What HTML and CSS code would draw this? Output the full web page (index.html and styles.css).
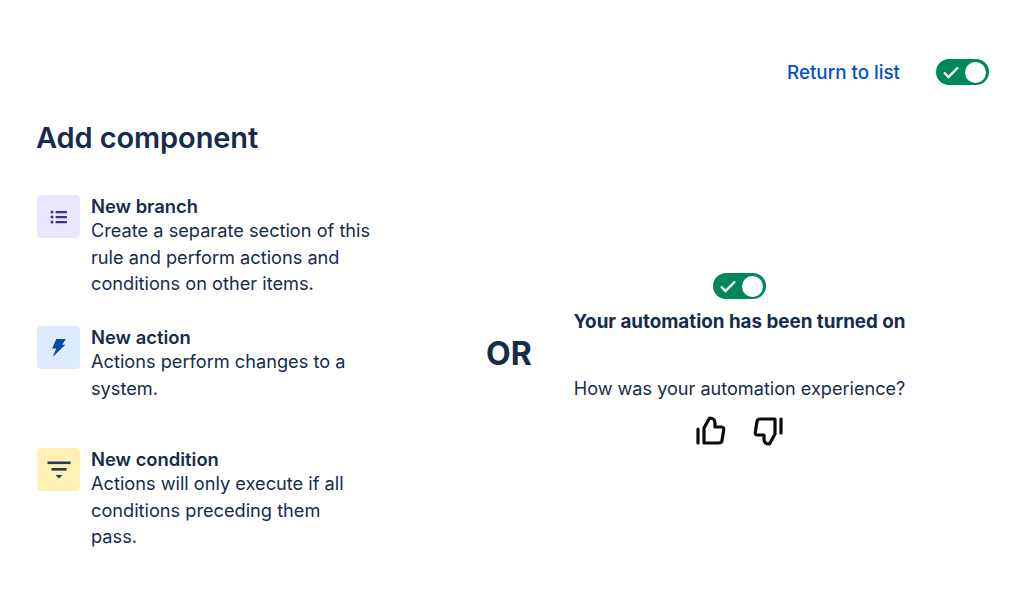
FILE: index.html
```html
<!DOCTYPE html>
<html lang="en">
<head>
<meta charset="UTF-8">
<meta name="viewport" content="width=device-width, initial-scale=1.0">
<title>Add component</title>
<link rel="stylesheet" href="styles.css">
</head>
<body>

<div class="topbar">
  <a class="return-link" href="#">Return to list</a>
  <span class="toggle">
    <svg width="18" height="14" viewBox="0 0 18 14"><path d="M2 7.5 L6.5 12 L16 2.5" fill="none" stroke="#fff" stroke-width="2.4"/></svg>
    <span class="knob"></span>
  </span>
</div>

<div class="main">
  <div class="left">
    <h1>Add component</h1>

    <div class="item item-branch">
      <div class="icon icon-purple">
        <svg width="18" height="14" viewBox="0 0 18 14" fill="#403294">
          <circle cx="2" cy="2" r="1.5"/>
          <circle cx="2" cy="7" r="1.5"/>
          <circle cx="2" cy="12" r="1.5"/>
          <rect x="5.5" y="1" width="11.5" height="2.2" rx="0.8"/>
          <rect x="5.5" y="6" width="11.5" height="2.2" rx="0.8"/>
          <rect x="5.5" y="11" width="11.5" height="2.2" rx="0.8"/>
        </svg>
      </div>
      <div class="text">
        <strong>New branch</strong>
        <p>Create a separate section of this rule and perform actions and conditions on other items.</p>
      </div>
    </div>

    <div class="item item-action">
      <div class="icon icon-blue">
        <svg width="16" height="20" viewBox="0 0 16 22"><path d="M5 1 H15.5 L11.5 7.5 H15 L1 21 L5 11.5 H0.5 Z" fill="#0747a6"/></svg>
      </div>
      <div class="text">
        <strong>New action</strong>
        <p>Actions perform changes to a system.</p>
      </div>
    </div>

    <div class="item item-condition">
      <div class="icon icon-yellow">
        <svg width="24" height="18" viewBox="0 0 24 18" fill="#253858">
          <rect x="0.5" y="0.5" width="23" height="2.6"/>
          <rect x="4.5" y="7" width="15" height="2.6"/>
          <path d="M8.5 14 H15.5 L12 17.5 Z"/>
        </svg>
      </div>
      <div class="text">
        <strong>New condition</strong>
        <p>Actions will only execute if all conditions preceding them pass.</p>
      </div>
    </div>
  </div>

  <div class="or">OR</div>

  <div class="right">
    <span class="toggle">
      <svg width="18" height="14" viewBox="0 0 18 14"><path d="M2 7.5 L6.5 12 L16 2.5" fill="none" stroke="#fff" stroke-width="2.4"/></svg>
      <span class="knob"></span>
    </span>
    <strong class="status">Your automation has been turned on</strong>
    <p class="question">How was your automation experience?</p>
    <div class="thumbs">
      <svg width="30" height="30" viewBox="0 0 30 30" fill="none" stroke="#0b0b0b" stroke-width="3.2" stroke-linejoin="round" stroke-linecap="round">
        <path d="M2 13 V27"/>
        <path d="M8 27 V12 L13.5 2 C17 2 19 4 19 7 V11 H25.5 C27.5 11 28 12.5 27.7 14 L26 24.5 C25.7 26.3 24.7 27 23 27 Z"/>
      </svg>
      <svg width="30" height="30" viewBox="0 0 30 30" fill="none" stroke="#0b0b0b" stroke-width="3.2" stroke-linejoin="round" stroke-linecap="round">
        <g transform="rotate(180 15 15)">
          <path d="M2 13 V27"/>
          <path d="M8 27 V12 L13.5 2 C17 2 19 4 19 7 V11 H25.5 C27.5 11 28 12.5 27.7 14 L26 24.5 C25.7 26.3 24.7 27 23 27 Z"/>
        </g>
      </svg>
    </div>
  </div>
</div>

</body>
</html>
```

FILE: styles.css
```css
body {
  margin: 0;
  background: #fff;
  color: #172b4d;
  font-family: Inter, "Noto Sans", sans-serif;
  font-size: 18.1px;
  line-height: 26.5px;
}
.topbar {
  display: flex;
  justify-content: flex-end;
  align-items: center;
  gap: 36px;
  padding: 59px 35px 0 0;
}
.return-link {
  margin-top: 2px;
  color: #0052cc;
  font-size: 18.8px;
  line-height: 22px;
  font-weight: 500;
  text-decoration: none;
}
.toggle {
  display: flex;
  align-items: center;
  justify-content: space-between;
  width: 53px;
  height: 26px;
  padding: 0 3px 0 6px;
  box-sizing: border-box;
  background: #00875a;
  border-radius: 13px;
}
.knob {
  width: 21px;
  height: 21px;
  background: #fff;
  border-radius: 50%;
}
.main {
  display: flex;
  padding: 1px 0 0 37px;
}
.left {
  width: 345px;
}
h1 {
  margin: 32px 0 37px -1px;
  font-size: 29px;
  line-height: 40px;
  font-weight: 600;
  letter-spacing: -0.1px;
}
.item {
  display: flex;
  gap: 11px;
}
.item-branch {
  margin-bottom: 29.5px;
}
.item-action {
  margin-bottom: 47px;
}
.item-condition p {
  max-width: 270px;
}
.icon {
  flex: none;
  display: flex;
  align-items: center;
  justify-content: center;
  width: 43px;
  height: 43px;
  border-radius: 4px;
}
.icon-purple { background: #eae6ff; }
.icon-blue { background: #deebff; }
.icon-yellow { background: #fff0b3; }
.text strong {
  display: block;
  font-size: 18.4px;
  font-weight: 600;
  line-height: 22px;
}
.text p {
  margin: 0;
  font-size: 18.2px;
}
.or {
  width: 55px;
  margin-left: 104px;
  padding-top: 248px;
  font-size: 32px;
  line-height: 40px;
  font-weight: 700;
}
.right {
  display: flex;
  flex-direction: column;
  align-items: center;
  width: 335px;
  margin-left: 31px;
  padding-top: 187px;
}
.status {
  margin-top: 10px;
  font-size: 18.8px;
  font-weight: 700;
  white-space: nowrap;
}
.question {
  margin: 39px 0 0;
}
.thumbs {
  display: flex;
  gap: 27px;
  margin-top: 15px;
}
```
